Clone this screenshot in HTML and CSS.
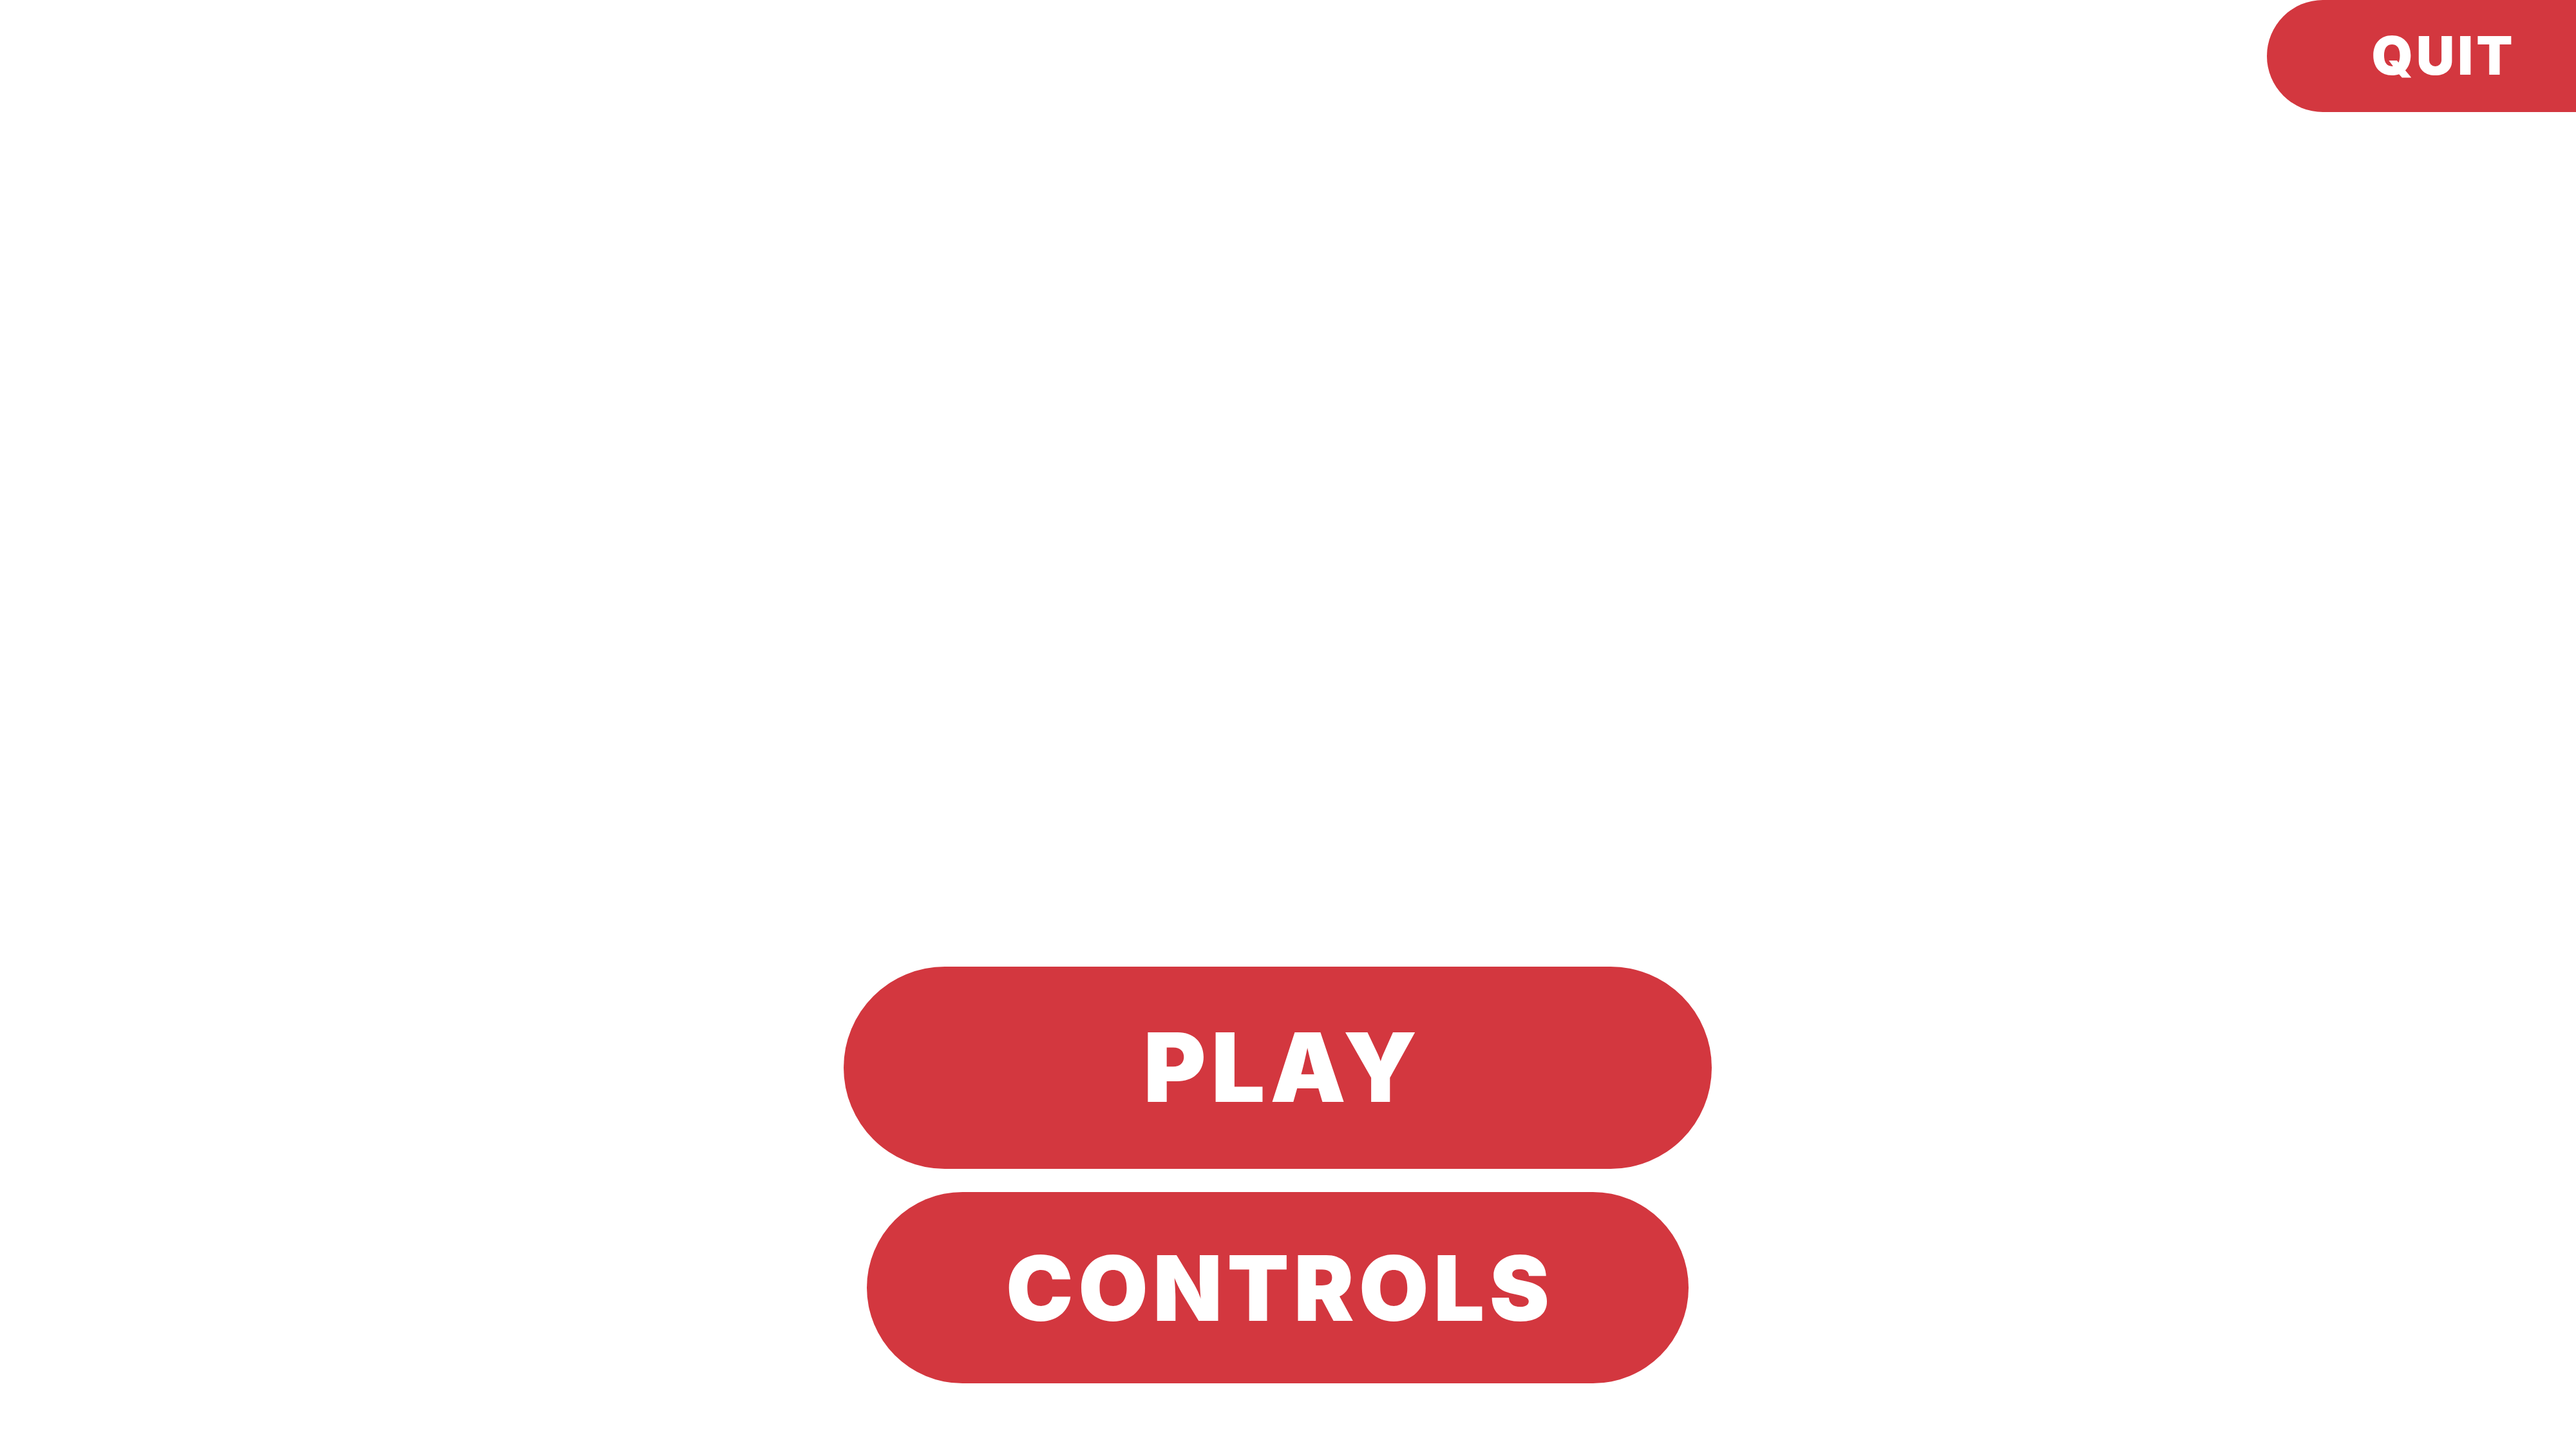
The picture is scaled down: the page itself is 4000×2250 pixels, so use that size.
FILE: index.html
```html
<!DOCTYPE html>
<html lang="en">
<head>
<meta charset="utf-8">
<title>Menu</title>
<link rel="stylesheet" href="styles.css">
</head>
<body>
<button class="quit">QUIT</button>
<main class="menu">
  <button class="btn btn-play">PLAY</button>
  <button class="btn btn-controls">CONTROLS</button>
</main>
</body>
</html>
```
FILE: styles.css
```css
html, body {
  margin: 0;
  padding: 0;
  width: 4000px;
  height: 2250px;
  background: #ffffff;
  overflow: hidden;
}
body {
  position: relative;
  font-family: Inter, "Liberation Sans", sans-serif;
}
button {
  font-family: inherit;
  border: none;
  margin: 0;
  color: #ffffff;
  background: #d3373f;
  display: flex;
  align-items: center;
  justify-content: center;
  line-height: 1;
  font-weight: 900;
  cursor: pointer;
}
.quit {
  position: absolute;
  top: 0;
  left: 3520px;
  width: 544px;
  height: 174px;
  border-radius: 87px 0 0 87px;
  font-size: 82px;
  letter-spacing: 5px;
  padding: 0 0 0 5px;
}
.menu {
  display: flex;
  flex-direction: column;
  align-items: flex-start;
  gap: 36px;
  padding: 1501px 0 0 1310px;
}
.btn {
  padding: 0;
}
.btn-play {
  width: 1348px;
  height: 314px;
  border-radius: 157px;
  font-size: 148px;
  letter-spacing: 8px;
  padding-left: 16px;
}
.btn-controls {
  margin-left: 36px;
  width: 1276px;
  height: 297px;
  border-radius: 149px;
  font-size: 140px;
  letter-spacing: 7.5px;
  padding-left: 7.5px;
}
```
